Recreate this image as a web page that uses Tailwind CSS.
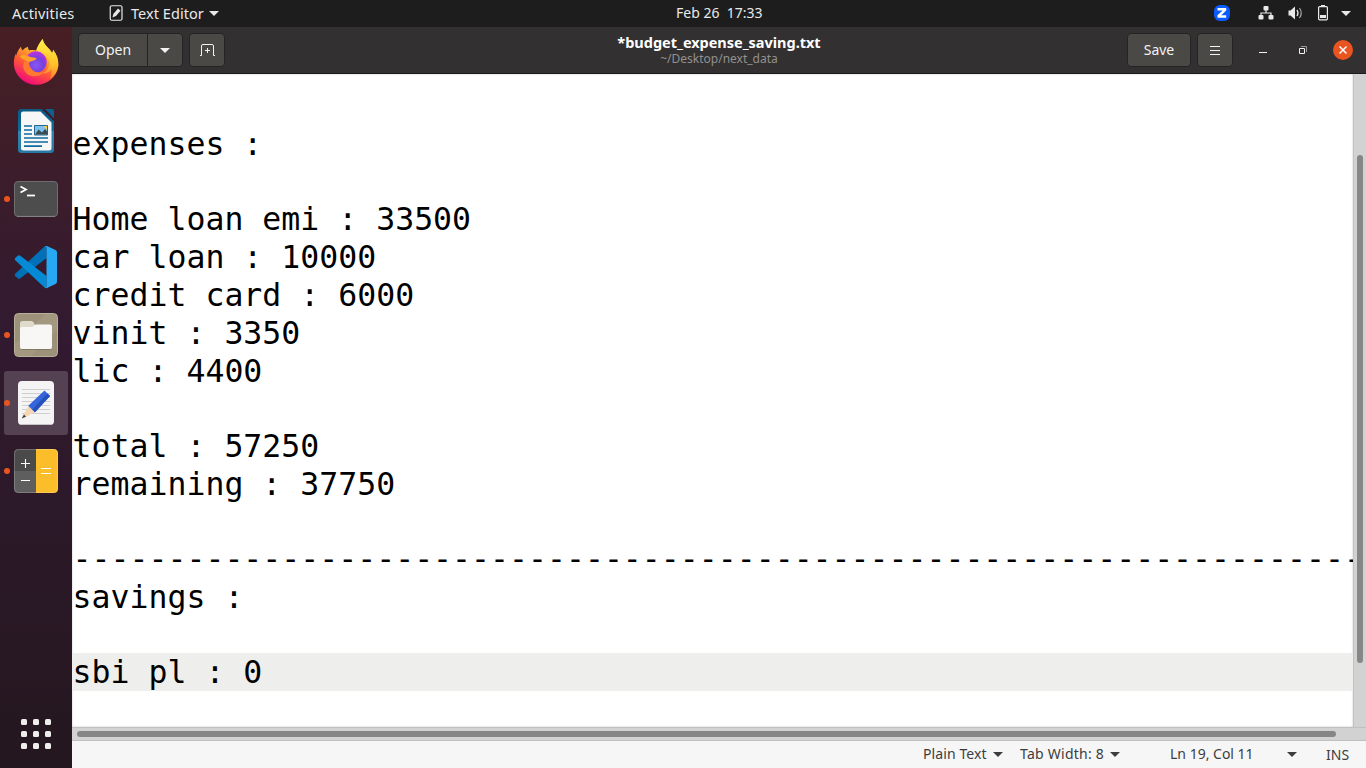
<!DOCTYPE html>
<html lang="en">
<head>
<meta charset="utf-8">
<title>budget_expense_saving.txt</title>
<script src="https://cdn.jsdelivr.net/npm/@tailwindcss/browser@4"></script>
</head>
<body class="w-[1366px] h-[768px] overflow-hidden bg-white font-['Noto_Sans','Open_Sans',sans-serif]">
<div class="w-[1366px] h-[768px] flex flex-col">
  <!-- system bar -->
  <header class="h-[27px] shrink-0 bg-[#1d1d1d] text-[#e9e9e9] text-[14px] leading-[26px] flex whitespace-pre">
    <div class="w-[97px] pl-3 text-[14.5px] tracking-[0.2px]">Activities</div>
    <div class="w-[579px] pl-3 flex">
      <svg class="w-[14px] h-[16px] mr-2 mt-[5px]" viewBox="0 0 14 16"><rect x="1.250" y=".75" width="11.750" height="14.500" rx="1.500" fill="none" stroke="#e9e9e9" stroke-width="1.200"/><path d="M3.500 12.500l.8-3.500L9 3.500 11.500 5.700 7 11z" fill="#e9e9e9"/></svg>
      <span class="text-[14.5px] tracking-[0.05px]">Text Editor</span>
      <svg class="w-[10px] h-[5px] ml-[5px] mt-[11px]" viewBox="0 0 10 5"><path d="M0 0h10L5 5z" fill="#e9e9e9"/></svg>
    </div>
    <div class="w-[538px]">Feb 26  17:33</div>
    <div class="flex items-center h-[26px]">
      <svg class="w-[16px] h-[16px]" viewBox="0 0 16 16"><rect width="16" height="16" rx="6" fill="#0b5cff"/><path d="M3.500 3h8.700v2.600L7.200 10.300h5v2.500H3.500v-2.600L8.600 5.500H3.500z" fill="#fff"/></svg>
      <svg class="w-[16px] h-[14px] ml-7" viewBox="0 0 16 14"><g fill="#e9e9e9"><rect x="5.500" width="5" height="4.500" rx="1"/><rect x=".5" y="9" width="5" height="4.500" rx="1"/><rect x="10.500" y="9" width="5" height="4.500" rx="1"/></g><path d="M8 4v3M3 9.500V7h10v2.500" fill="none" stroke="#e9e9e9" stroke-width="1.200"/></svg>
      <svg class="w-[16px] h-[14px] ml-[13px]" viewBox="0 0 16 14"><path d="M1.500 4.500h2L8 .5v13l-4.500-4h-2z" fill="#e9e9e9"/><path d="M10 4q2 3 0 6" fill="none" stroke="#e9e9e9" stroke-width="1.300"/><path d="M12.500 2q3.500 5 0 10" fill="none" stroke="#a0a0a0" stroke-width="1.300"/></svg>
      <svg class="w-[10px] h-[16px] ml-[15px]" viewBox="0 0 10 16"><path d="M3 0h4v2H3z" fill="#e9e9e9"/><rect x=".6" y="1.600" width="8.800" height="13.200" rx="1" fill="none" stroke="#e9e9e9" stroke-width="1.200"/><path d="M2 10h6v3H2z" fill="#e9e9e9"/></svg>
      <svg class="w-[10px] h-[5px] ml-[13px]" viewBox="0 0 10 5"><path d="M0 0h10L5 5z" fill="#e9e9e9"/></svg>
    </div>
  </header>

  <div class="flex h-[741px]">
    <!-- dock -->
    <nav class="w-[72px] shrink-0 h-full flex flex-col pt-[2px] bg-linear-to-b from-[#471f24] via-[#321a30] via-40% to-[#24171f]">
      <div class="h-[68px] flex items-center justify-center pb-[2px]">
        <svg class="w-[48px] h-[48px]" viewBox="0 0 48 48">
          <defs>
            <linearGradient id="ff" x1=".8" y1="0" x2=".3" y2="1"><stop offset="0" stop-color="#fff44f"/><stop offset=".35" stop-color="#ffb02a"/><stop offset=".62" stop-color="#ff5b36"/><stop offset="1" stop-color="#f0047f"/></linearGradient>
            <radialGradient id="fp" cx=".5" cy=".65" r=".6"><stop offset="0" stop-color="#8a58f8"/><stop offset=".6" stop-color="#7540dc"/><stop offset="1" stop-color="#b833e1"/></radialGradient>
            <linearGradient id="fy" x1=".5" y1="0" x2=".5" y2="1"><stop offset="0" stop-color="#fff04a"/><stop offset=".6" stop-color="#ffc62b"/><stop offset="1" stop-color="#ff8a2c"/></linearGradient>
          </defs>
          <g transform="translate(.5 0)">
          <path d="M8.500 8.500c.2 1.800.6 2.800 1.500 4 1.500-1.500 3-3 5.500-3.700 0 1.700.4 2.500 1 3.400 3.500-.4 6.500-.2 8 .8C24.500 9 27 5 30.200 1c.5 4 3 6.500 6.400 10 1.300 1.300 2.300 2.700 3 4.300.7-1.300 1-2.500.9-3.600 4 5 5.500 10 5.500 15.800C44.500 38.500 35.500 46.800 24 46.800S2.200 38 1.400 26.500C1.200 22.500 1.800 18.500 3.300 15.500L3.500 18C4.500 14.500 6 11.500 8.500 8.500z" fill="url(#ff)"/>
          <path d="M23.500 13C24.500 9 27 5 30.200 1c.5 4 3 6.500 6.400 10 1.300 1.300 2.300 2.700 3 4.300.7-1.300 1-2.500.9-3.600 4 5 5.500 10 5 15.800-.5 6-3.500 10.500-8 13 3-6 2-16-3-21-3-3-6-4.500-11-6.500z" fill="url(#fy)"/>
          <circle cx="23.500" cy="24" r="10.700" fill="url(#fp)"/>
          <path d="M12 23C9 29 11.500 35 17.500 37.500 23 39.500 29 38 32 33.500c-5 2-10 1-12.500-2-2.300-2.500-3.500-5-2.500-8z" fill="#ff7a30"/>
          <path d="M7 18.500c3-2.500 7.500-1.500 10.500.5 2.500.5 5 .3 6.700 1.200-1 1.800-3.500 3-8 3.800C13 22.500 10 21.500 7 18.500z" fill="#ffa12b"/>
          <path d="M28 15c6 1.500 8.500 5.500 8.500 10s-2 8-6 10.500c6 0 11-5 10-12-1-5-6-9-12.500-8.500z" fill="#ffc42d" opacity=".6"/>
          </g>
        </svg>
      </div>
      <div class="h-[68px] flex items-center justify-center">
        <svg class="w-[36px] h-[44px]" viewBox="0 0 36 44">
          <defs><linearGradient id="w" x2="0" y2="1"><stop offset="0" stop-color="#0b5a84"/><stop offset=".5" stop-color="#116a99"/><stop offset=".5" stop-color="#3583ad"/><stop offset="1" stop-color="#2778a5"/></linearGradient></defs>
          <path d="M3.500 0h20.500l12 12v28.500a3.500 3.500 0 0 1-3.500 3.500h-29A3.500 3.500 0 0 1 0 40.500v-37A3.500 3.500 0 0 1 3.500 0z" fill="url(#w)"/><path d="M24 0L36 12V9.500L27 0z" fill="#3c1c29"/><path d="M27 0H34a2 2 0 0 1 2 2V9.500z" fill="#0d5f8d"/>
          <path d="M5 2.500h17.500L33.500 13.500V39a2.500 2.500 0 0 1-2.500 2.500h-25.500A2.500 2.500 0 0 1 3 39V4.500a2 2 0 0 1 2-2z" fill="#f7f7f7"/>
          <path d="M6 17h8M6 21h8M6 25h8M6 29h24M6 33h24M6 37.200h18" stroke="#0c6ba0" stroke-width="1.700"/>
          <path d="M16.500 16.500H29.500v9.500H16.500z" fill="#7cc4ee" stroke="#25668f"/><path d="M17 25.500l3.500-5 3.500 3 3-3.500 2.500 3v2.500z" fill="#3c4a52"/><path d="M25.500 17H29V20.500z" fill="#ffcd38"/>
        </svg>
      </div>
      <div class="h-[68px] flex items-center">
        <i class="w-[6px] h-[6px] rounded-full bg-[#e95420] ml-1 mr-1"></i>
        <svg class="w-[44px] h-[36px]" viewBox="0 0 44 36"><rect x=".5" y=".5" width="43" height="35" rx="3.500" fill="#4d4d4d" stroke="#6e6e6e"/><path d="M3 35.400h38" stroke="#8a8a8a" stroke-width=".8"/><path d="M6.500 5.500l5.500 3-5.500 3" fill="none" stroke="#fff" stroke-width="1.800"/><path d="M13 14.500h8" stroke="#fff" stroke-width="1.800"/></svg>
      </div>
      <div class="h-[68px] flex items-center justify-center">
        <svg class="w-[44px] h-[44px]" viewBox="0 0 44 44"><path d="M32.500 1v12L6 33.500q-1.200.8-2.300-.2L1.200 31q-1-1.200 0-2.300L30 2q1.200-1 2.500-1z" fill="#0070b8"/><path d="M32.500 43V31L6 10.500q-1.200-.8-2.300.2L1.200 13q-1 1.200 0 2.300L30 42q1.200 1.200 2.500 1z" fill="#058bd6"/><path d="M30 2q1-1.200 3-1l8.500 4q1.500.8 1.500 2.500v29q0 1.700-1.500 2.500l-8.500 4q-2 .5-3-1 2.500 1.500 2.500-1V3q0-2.500-2.500-1z" fill="#27a8f2"/></svg>
      </div>
      <div class="h-[68px] flex items-center">
        <i class="w-[6px] h-[6px] rounded-full bg-[#e95420] ml-1 mr-1"></i>
        <svg class="w-[44px] h-[44px]" viewBox="0 0 44 44"><rect x=".5" y=".5" width="43" height="43" rx="4" fill="#9b9279" stroke="#b9b19a"/><path d="M1 31L31 1h8q4 0 4 4v12L17 43H5q-4 0-4-4z" fill="#a69e86" opacity=".6"/><path d="M6 36V10.500Q6 8 8.500 8h9q1.500 0 2.200 1.500L21 12h14v10H6z" fill="#dedbcc"/><path d="M6 15.500Q6 14 8 14h9.500q1.500 0 2.500-1.200 1-1.300 2.500-1.300H36q2 0 2 2v20.500q0 2-2 2H8q-2 0-2-2z" fill="#f8f7f5"/><path d="M7.500 36.500h29" stroke="#817963"/></svg>
      </div>
      <div class="h-[68px] flex items-center justify-center">
        <div class="w-[64px] h-[64px] rounded-[3px] bg-[#544151] flex items-center">
          <i class="w-[6px] h-[6px] rounded-full bg-[#e95420] mr-2"></i>
          <svg class="w-[36px] h-[44px]" viewBox="0 0 36 44"><rect width="36" height="44" rx="4" fill="#f4f4f4"/><path d="M3 43.500h30" stroke="#c4c4c4"/><path d="M4 8.500h28M4 12.500h28M4 16.500h28M4 20.500h28M4 24.500h28M4 28.500h28M4 32.500h28" stroke="#cfcfcf"/><path d="M26.500 9.500L32 15 17.500 31 10.500 29V24.500z" fill="#3465dc"/><path d="M29.500 12.500L32 15 16.500 31.500 14 29z" fill="#2450b8"/><path d="M10.500 25l6 6-8.500 5-3-1.500z" fill="#f6d5b2"/><path d="M6 33.500l-2.300 4 4.300-1.800z" fill="#3c3c3c"/></svg>
        </div>
      </div>
      <div class="h-[68px] flex items-center">
        <i class="w-[6px] h-[6px] rounded-full bg-[#e95420] ml-1 mr-1"></i>
        <svg class="w-[44px] h-[44px]" viewBox="0 0 44 44"><path d="M4.500 0h17.500v44H4.500q-4.500 0-4.500-4.500V4.500q0-4.500 4.500-4.500z" fill="#5e5e5e"/><path d="M4.500 0h17.500v22H0V4.500q0-4.500 4.500-4.500z" fill="#4a4a4a"/><path d="M22 0h17.500q4.500 0 4.500 4.500v35q0 4.500-4.500 4.500H22z" fill="#fcbd2a"/><rect x=".5" y=".5" width="43" height="43" rx="4" fill="none" stroke="#fff" stroke-opacity=".2"/><path d="M7 14.500h9M11.500 10v9M7 31.500h9M27 19.500h10M27 24.500h10" stroke="#fff" stroke-width="1.100"/></svg>
      </div>
      <svg class="w-[30px] h-[30px] mt-auto mb-[19px] ml-[21px]" viewBox="0 0 30 30" fill="#f0eeec"><rect width="6" height="6" rx="1.500"/><rect x="12" width="6" height="6" rx="1.500"/><rect x="24" width="6" height="6" rx="1.500"/><rect y="12" width="6" height="6" rx="1.500"/><rect x="12" y="12" width="6" height="6" rx="1.500"/><rect x="24" y="12" width="6" height="6" rx="1.500"/><rect y="24" width="6" height="6" rx="1.500"/><rect x="12" y="24" width="6" height="6" rx="1.500"/><rect x="24" y="24" width="6" height="6" rx="1.500"/></svg>
    </nav>

    <!-- editor window -->
    <main class="w-[1294px] h-full flex flex-col">
      <div class="h-[47px] shrink-0 bg-[#323031] border-b border-[#1c1c1c] flex pt-[6px] pl-[6px] text-[14px] text-[#f2f2f2]">
        <div class="h-[34px] flex rounded-[4px] border border-[#252424] bg-[#4a4946] leading-[31px]">
          <div class="w-[69px] border-r border-[#252424] text-center">Open</div>
          <div class="w-[34px] flex items-center justify-center"><svg class="w-[10px] h-[5px]" viewBox="0 0 10 5"><path d="M0 0h10L5 5z" fill="#f2f2f2"/></svg></div>
        </div>
        <div class="ml-[6px] w-[36px] h-[34px] rounded-[4px] border border-[#252424] bg-[#4a4946] flex items-center justify-center">
          <svg class="w-[15px] h-[12px]" viewBox="0 0 15 12"><path d="M0 11.500h1.500V2Q1.500.5 3 .5h9Q13.500.5 13.500 2v9.500H15M7.500 4v5M5 6.500h5" fill="none" stroke="#f2f2f2"/></svg>
        </div>
        <div class="w-[902px] pl-[185px] h-[34px] text-center">
          <div class="w-[618px] text-[14.500px] leading-[18px] font-bold tracking-[-0.02px] text-white">*budget_expense_saving.txt</div>
          <div class="w-[618px] text-[12px] leading-[14px] pt-[1px] text-[#92908f]">~/Desktop/next_data</div>
        </div>
        <div class="w-[64px] h-[34px] rounded-[4px] border border-[#252424] bg-[#4a4946] leading-[31px] text-center">Save</div>
        <div class="ml-[6px] w-[36px] h-[34px] rounded-[4px] border border-[#252424] bg-[#4a4946] flex items-center justify-center">
          <svg class="w-[10px] h-[9px]" viewBox="0 0 10 9"><path d="M0 .5h10M0 4.500h10M0 8.500h10" stroke="#f2f2f2"/></svg>
        </div>
        <svg class="w-[8px] h-[1px] ml-[26px] mt-[19px]" viewBox="0 0 8 1"><path d="M0 0h8v1H0z" fill="#f2f2f2"/></svg>
        <svg class="w-[8px] h-[8px] ml-[32px] mt-[13px]" viewBox="0 0 8 8"><path d="M.5 2.500h5v5h-5z" fill="none" stroke="#f2f2f2"/><path d="M2 .5h5.500V6" fill="none" stroke="#9a9998"/></svg>
        <svg class="w-[20px] h-[20px] ml-[26px] mt-[7px]" viewBox="0 0 20 20"><circle cx="10" cy="10" r="10" fill="#e95420"/><path d="M6.500 6.500l7 7M13.500 6.500l-7 7" stroke="#fff" stroke-width="1.500"/></svg>
      </div>

      <div class="flex h-[653px]">
        <div class="w-[1281px] h-[653px] overflow-hidden bg-white pt-[14px] font-['DejaVu_Sans_Mono',monospace] text-[31.500px] tracking-[0.01px] indent-[0.6px] leading-[38px] text-black whitespace-nowrap shadow-[inset_0_0_2px_#bbb]">
          <div class="h-[37px]"></div>
          <div class="h-[38px]">expenses :</div>
          <div class="h-[37px]"></div>
          <div class="h-[38px]">Home loan emi : 33500</div>
          <div class="h-[38px]">car loan : 10000</div>
          <div class="h-[38px]">credit card : 6000</div>
          <div class="h-[38px]">vinit : 3350</div>
          <div class="h-[38px]">lic : 4400</div>
          <div class="h-[37px]"></div>
          <div class="h-[38px]">total : 57250</div>
          <div class="h-[38px]">remaining : 37750</div>
          <div class="h-[37px]"></div>
          <div class="h-[38px]">--------------------------------------------------------------------</div>
          <div class="h-[38px]">savings :</div>
          <div class="h-[37px]"></div>
          <div class="h-[38px] bg-[#eeeeec]">sbi pl : 0</div>
        </div>
        <div class="w-[13px] border-l border-[#c2c2c2] bg-[#d2d2d2] pl-[3px] pt-[81px]"><div class="w-[6px] h-[508px] rounded-full bg-[#868686]"></div></div>
      </div>
      <div class="h-[14px] shrink-0 bg-[#d2d2d2] border-y border-[#c0c0c0] pl-[5px] pt-[3px]"><div class="w-[1259px] h-[6px] rounded-full bg-[#868686]"></div></div>

      <footer class="h-[27px] shrink-0 bg-[#f6f6f6] text-[14px] leading-[24px] text-[#3d3d3d] flex items-start pt-[1px] pl-[851px] whitespace-nowrap">
        <div class="w-[70px] tracking-[0.1px]">Plain Text</div><svg class="w-[10px] h-[5px] mt-[10px]" viewBox="0 0 10 5"><path d="M0 0h10L5 5z" fill="#3d3d3d"/></svg>
        <div class="w-[90px] ml-[17px] tracking-[0.25px]">Tab Width: 8</div><svg class="w-[10px] h-[5px] mt-[10px]" viewBox="0 0 10 5"><path d="M0 0h10L5 5z" fill="#3d3d3d"/></svg>
        <div class="w-[117px] ml-[50px]">Ln 19, Col 11</div><svg class="w-[10px] h-[5px] mt-[10px]" viewBox="0 0 10 5"><path d="M0 0h10L5 5z" fill="#3d3d3d"/></svg>
        <div class="ml-[29px] pt-[1px]">INS</div>
      </footer>
    </main>
  </div>
</div>
</body>
</html>
